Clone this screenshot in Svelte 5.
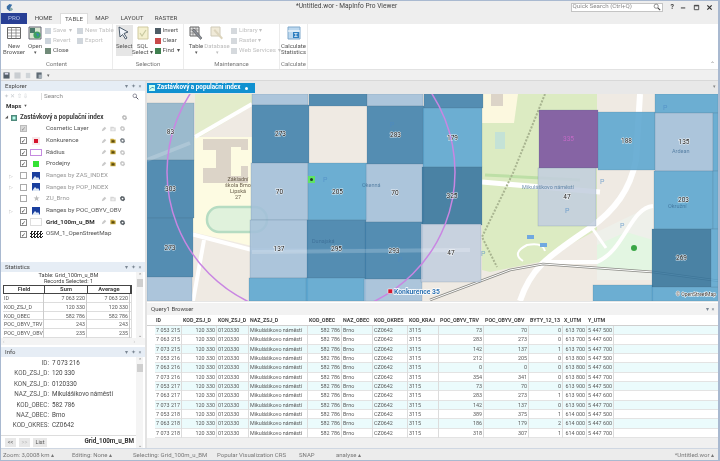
<script>
  const tabs = [['HOME',33],['TABLE',28],['MAP',28],['LAYOUT',32],['RASTER',36]];
  const layers = [
    {n:'Cosmetic Layer',c:'grey',s:'none',p:1,f:0,g:0},
    {n:'Konkurence',c:'on',s:'red',p:1,f:1,g:1},
    {n:'Rádius',c:'on',s:'rad',p:1,f:1,g:0},
    {n:'Prodejny',c:'on',s:'green',p:1,f:1,g:0},
    {n:'Ranges by ZAS_INDEX',c:'off',s:'rng',r:1,dim:true},
    {n:'Ranges by POP_INDEX',c:'off',s:'rng',r:1,dim:true},
    {n:'ZU_Brno',c:'off',s:'star',dim:true,p:1,f:0,g:2},
    {n:'Ranges by POC_OBYV_OBV',c:'on',s:'rng',r:1},
    {n:'Grid_100m_u_BM',c:'on',s:'grid',b:1,p:1,f:1,g:2},
    {n:'OSM_1_OpenStreetMap',c:'on',s:'osm'}
  ];
  const stats = [['ID','7 063 220','7 063 220'],['KOD_ZSJ_D','120 330','120 330'],['KOD_OBEC','582 786','582 786'],['POC_OBYV_TRV','243','243'],['POC_OBYV_OBV','235','235']];
  const info = [['ID','7 073 216'],['KOD_ZSJ_D','120 330'],['KON_ZSJ_D','0120330'],['NAZ_ZSJ_D','Mikulášikovo náměstí'],['KOD_OBEC','582 786'],['NAZ_OBEC','Brno'],['KOD_OKRES','CZ0642']];
  const head = ['ID','KOD_ZSJ_D','KON_ZSJ_D','NAZ_ZSJ_D','KOD_OBEC','NAZ_OBEC','KOD_OKRES','KOD_KRAJ','POC_OBYV_TRV','POC_OBYV_OBV','BYTY_12_13','X_UTM','Y_UTM'];
  const right = [1,1,0,0,1,0,0,0,1,1,1,1,1];
  const trv = [73,283,142,212,0,354,73,283,142,389,186,318];
  const obv = [70,273,137,205,0,341,70,273,137,375,179,307];
  const byty = [0,0,1,0,0,0,0,1,0,1,2,1];
  const rows = trv.map((t,i)=>{
    const a=['7 053','7 063','7 073'][i%3], b=215+Math.floor(i/3);
    const x=['613 700','613 800','613 900','614 000'][Math.floor(i/3)];
    const y=['5 447 500','5 447 600','5 447 700'][i%3];
    return [`${a} ${b}`,'120 330','0120330','Mikulášikovo náměstí','582 786','Brno','CZ0642','3115',t,obv[i],byty[i],x,y];
  });
  const L='#a3bfd9', M='#5aa5cf', D='#3f80ab', V='#33739b', G='#c3cede';
  const cells = [
    [147,103,47,57,'#8fb3c9',83],[147,160,47,58,D,303],[147,218,46,59,D,273],[147,277,45,24,L,''],
    [252,94,56,11,L,''],[252,105,57,58,D,273],[251,163,57,57,L,70],[250,220,58,58,L,137],[249,278,59,23,M,''],
    [309,94,58,12,D,''],[308,163,59,57,M,205],[307,220,59,58,D,295],[306,278,60,23,M,''],
    [367,94,56,12,L,''],[367,106,57,58,D,283],[366,164,58,58,L,70],[365,222,58,57,D,293],[364,279,58,22,L,''],
    [424,94,59,14,D,''],[423,108,59,59,M,179],[422,167,60,58,V,325],[421,224,60,58,G,47],
    [539,110,59,58,'#7a519f',335],[538,168,58,58,G,47],
    [598,112,57,58,M,188],[593,285,60,16,M,''],
    [655,94,63,19,M,''],[655,113,58,58,L,135],[654,171,59,58,M,203],[652,229,59,58,V,269],[652,287,66,14,M,''],
    [713,113,5,58,M,''],[713,171,5,58,M,''],[711,229,7,58,M,'']
  ];
</script>

{#snippet small(label, color, dim=false)}
  <div class="small" class:dim><i class="si" style="background:{color}"></i>{label}</div>
{/snippet}

<div class="win">
  <header class="title">
    <svg class="logo" viewBox="0 0 10 10" width="9" height="9"><path d="M5 1 2 3.500 2 6.500 5 9 8.500 7.500 6 5 8 2Z" fill="#3a6ea5"/><circle cx="6.800" cy="7" r="1.600" fill="#8aa"/></svg>
    <span class="ttext">*Untitled.wor - MapInfo Pro Viewer</span>
    <div class="wctl">
      <div class="qs"><span>Quick Search (Ctrl+Q)</span>
        <svg viewBox="0 0 10 10" width="8" height="8"><circle cx="4" cy="4" r="2.600" fill="none" stroke="#777" stroke-width="1"/><path d="M6 6l3 3" stroke="#444" stroke-width="1.400"/></svg>
      </div>
      <b class="w q">?</b>
      <svg class="w" viewBox="0 0 8 8" width="7" height="7"><path d="M1 4.500h5" stroke="#444" stroke-width="1.200"/></svg>
      <svg class="w" viewBox="0 0 8 8" width="7" height="7"><path d="M1.500 1.500h5v5h-5z" fill="none" stroke="#444"/><path d="M1.500 2h5" stroke="#444" stroke-width="1.300"/></svg>
      <svg class="w" viewBox="0 0 8 8" width="7" height="7"><path d="M1.500 1.500l5 5M6.500 1.500l-5 5" stroke="#333" stroke-width="1.400"/></svg>
    </div>
  </header>

  <nav class="tabs">
    <div class="pro">PRO</div>
    {#each tabs as t}<div class="tab" class:active={t[0]==='TABLE'} style="width:{t[1]}px">{t[0]}</div>{/each}
  </nav>

  <section class="ribbon">
    <div class="group g1">
      <div class="gbody">
        <div class="big w26"><svg viewBox="0 0 14 14" width="14" height="14"><path d="M.5 1.500h13v11H.5z" fill="#fff" stroke="#666"/><path d="M.5 4h13M.5 7h13M.5 10h13M4.500 1.500v11M9 1.500v11" stroke="#777" stroke-width=".7"/></svg><span>New<br>Browser</span></div>
        <div class="big w16"><svg viewBox="0 0 14 14" width="14" height="14"><path d="M1 1h12v12H1z" fill="#d8e6d0" stroke="#667"/><path d="M2 2h5v5H2z" fill="#4a7a6a"/><circle cx="9" cy="9" r="3.600" fill="#3fa060"/><path d="M8 7l3 1-1 3z" fill="#3b7fc0"/></svg><span>Open<br><em>▾</em></span></div>
        <div class="col w32 ml2">
          {@render small('Save  ▾','#ccd4dc',true)}
          {@render small('Revert','#ccd4dc',true)}
          {@render small('Close','#708a78')}
        </div>
        <div class="col w34">
          {@render small('New Table','#d0d6dc',true)}
          {@render small('Export','#d0d6dc',true)}
        </div>
      </div>
      <div class="glabel">Content</div>
    </div>
    <div class="group g2">
      <div class="gbody">
        <div class="big w17 sel ml3"><svg viewBox="0 0 14 14" width="14" height="14"><path d="M2 1l9 5-4 1.500L10 12l-1.500 1-3-4.500L3 11z" fill="#f2f6fb" stroke="#3c4c5c" stroke-width=".9"/></svg><span>Select</span></div>
        <div class="big w20"><svg viewBox="0 0 14 14" width="14" height="14"><path d="M2 1h10v12H2z" fill="#f4f0cf" stroke="#cfc9a0"/><path d="M4 7l2 3 4-6" fill="none" stroke="#c8c8a0" stroke-width="1.200"/></svg><span>SQL<br>Select ▾</span></div>
        <div class="col w31 ml2">
          {@render small('Invert','#4f5d66')}
          {@render small('Clear','#c94a4a')}
          {@render small('Find  ▾','#3f7f4f')}
        </div>
      </div>
      <div class="glabel">Selection</div>
    </div>
    <div class="group g3">
      <div class="gbody">
        <div class="big w20 ml2"><svg viewBox="0 0 14 14" width="14" height="14"><path d="M1 1h9v9H1z" fill="#e5e5e5" stroke="#666"/><path d="M1 4h9M1 7h9M4 1v9M7 1v9" stroke="#777" stroke-width=".7"/><path d="M5 3l8 9-1.500 1.500-8-9z" fill="#8a8f98" stroke="#444" stroke-width=".5"/></svg><span>Table<br><em>▾</em></span></div>
        <div class="big w22 dim"><svg viewBox="0 0 14 14" width="14" height="14"><path d="M1 1h9v9H1z" fill="#f0ead8" stroke="#cfcab8"/><path d="M5 3l8 9-1.500 1.500-8-9z" fill="#ddd5bd"/></svg><span>Database<br><em>▾</em></span></div>
        <div class="col w48 ml3">
          {@render small('Library ▾','#d5d9dd',true)}
          {@render small('Raster ▾','#d5d9dd',true)}
          {@render small('Web Services ▾','#d5d9dd',true)}
        </div>
      </div>
      <div class="glabel">Maintenance</div>
    </div>
    <div class="group g4">
      <div class="gbody">
        <div class="big w28"><svg viewBox="0 0 14 14" width="14" height="14"><path d="M1 1h12v12H1z" fill="#bcd8ef" stroke="#7ea8cc"/><path d="M1 5h12" stroke="#fff"/><path d="M6 6h6v6H6z" fill="#2f7fc0"/><path d="M10.500 7.500h-3l2 1.500-2 1.500h3" fill="none" stroke="#fff" stroke-width=".7"/></svg><span>Calculate<br>Statistics</span></div>
      </div>
      <div class="glabel">Calculate</div>
    </div>
    <span class="collapse">⌃</span>
  </section>

  <div class="qat">
    <svg viewBox="0 0 8 8" width="7" height="7"><path d="M.5.500h7v7h-7z" fill="#55606a"/><path d="M2 1h4v2H2z" fill="#dde"/></svg>
    <svg viewBox="0 0 8 8" width="7" height="7"><path d="M.5.500h7v7h-7z" fill="#c9cdd1"/></svg>
    <svg viewBox="0 0 8 8" width="7" height="7"><path d="M1 1h5v6H1z" fill="#cfd4d8"/></svg>
    <svg viewBox="0 0 8 8" width="7" height="7"><path d="M.5.500h6v7h-6z" fill="#5e6a74"/><path d="M3 3h4v4H3z" fill="#a7b0b8"/></svg>
    <span class="qarrow">▾</span>
  </div>

  <main class="main">
    <aside class="left">
      <div class="ptitle"><span>Explorer</span><span class="pbtns">▾ ✦ ×</span></div>
      <div class="extool">
        <span class="exi">✦ ✕ ⇧ ⇩</span>
        <div class="search"><span>Search</span><svg viewBox="0 0 10 10" width="7" height="7"><circle cx="4" cy="4" r="2.600" fill="none" stroke="#667" stroke-width="1"/><path d="M6 6l3 3" stroke="#445" stroke-width="1.300"/></svg></div>
      </div>
      <div class="maps"><b>Maps</b> <span>▼</span></div>
      <div class="root"><span class="tri">◢</span><svg viewBox="0 0 8 8" width="6" height="6"><path d="M0 0h8v8H0z" fill="#4f8a7c"/><path d="M2 2h4v4H2z" fill="#bfe"/></svg><b>Zastávkový a populační index</b>
        <svg class="rg" viewBox="0 0 8 8" width="7" height="7"><path d="M1 3l2-2 3 1 1 3-2 2-3-1z" fill="#bdbdbd"/><circle cx="4" cy="4" r="1" fill="#fff"/></svg>
      </div>
      <div class="tree">
        {#each layers as l}
          <div class="layer" class:dimr={l.dim}>
            <span class="exp">{l.r ? '▷' : ''}</span>
            <span class="cb {l.c}">{l.c==='off' ? '' : '✓'}</span>
            {#if l.r}
              <span class="sw swr"><svg viewBox="0 0 8 8" width="8" height="8"><path d="M0 0h8v8H0z" fill="#1a3f9e"/><path d="M0 8l3-4 2 2 1-1 2 3z" fill="#dfe9f5"/></svg></span>
            {:else if l.s==='red'}
              <span class="sw"><i class="dot red"></i></span>
            {:else if l.s==='green'}
              <span class="sw"><i class="dot green"></i></span>
            {:else if l.s==='rad'}
              <span class="sw"><i class="radb"></i></span>
            {:else if l.s==='star'}
              <span class="sw star">★</span>
            {:else if l.s==='grid'}
              <span class="sw"><i class="gridb"></i></span>
            {:else if l.s==='osm'}
              <span class="sw"><i class="osm"></i></span>
            {:else}
              <span class="sw"></span>
            {/if}
            <span class="lname" class:bold={l.b}>{l.n}</span>
            {#if l.p}
              <span class="acts">
                <svg viewBox="0 0 8 8" width="6" height="6"><path d="M1 7l1-3 3-3 2 2-3 3z" fill="#c9c9c9"/></svg>
                <svg viewBox="0 0 8 8" width="6" height="6"><path d="M.5 1h4l1 1h2v5h-7z" fill={l.f ? '#c8a93a' : '#d5d5d5'}/><path d="M2 3h4v3H2z" fill={l.f ? '#5a4a10' : '#eee'}/></svg>
                <svg viewBox="0 0 8 8" width="7" height="7"><path d="M1 3l2-2 3 1 1 3-2 2-3-1z" fill={l.g===1 ? '#7d848a' : l.g===2 ? '#5a6167' : '#c9c9c9'}/><circle cx="4" cy="4" r="1" fill="#fff"/></svg>
              </span>
            {/if}
          </div>
        {/each}
      </div>
      <div class="fill"></div>

      <div class="ptitle"><span>Statistics</span><span class="pbtns">▾ ✦ ×</span></div>
      <div class="statwrap">
        <div class="statbody">
          <div class="statcap">Table: Grid_100m_u_BM<br>Records Selected: 1</div>
          <div class="sthead"><b>Field</b><b>Sum</b><b>Average</b></div>
          {#each stats as s}
            <div class="strow"><span>{s[0]}</span><span class="r">{s[1]}</span><span class="r">{s[2]}</span></div>
          {/each}
        </div>
        <div class="vs"><span>⌃</span><i></i><span class="mt">⌄</span></div>
      </div>
      <div class="hs"><span>‹</span><span>›</span></div>

      <div class="ptitle t2"><span>Info</span><span class="pbtns">▾ ✦ ×</span></div>
      <div class="statwrap infoarea">
        <div class="infobody">
          {#each info as r}
            <div class="irow"><span class="ik">{r[0]}:</span><span>{r[1]}</span></div>
          {/each}
          <div class="ibtns"><button>&lt;&lt;</button><button class="off">&gt;&gt;</button><button>List</button><b>Grid_100m_u_BM</b></div>
        </div>
        <div class="vs"><span>⌃</span><i></i><span class="mt">⌄</span></div>
      </div>
    </aside>

    <div class="right">
      <div class="mapbar"><div class="maptab"><svg viewBox="0 0 8 8" width="6" height="6"><path d="M0 0h8v8H0z" fill="#cfe"/><path d="M1 6l3-3 3 1" stroke="#27a" fill="none"/></svg><b>Zastávkový a populační index</b><span class="tdot"></span></div><span class="barr">▾</span></div>
      <svg class="map" viewBox="147 94 571 207" preserveAspectRatio="none">
        <rect x="147" y="94" width="571" height="207" fill="#efeae3"/>
        <path d="M195 94H252V106L195 140Z" fill="#e3eccb"/>
        <path d="M192 137H252V246L192 232Z" fill="#fdfbe2"/>
        <path d="M203 139H248V150H233V166H248V183H203V168H216V150H203Z" fill="#dcd4c8"/>
        <path d="M231 147h10v29h-10z" fill="#fdfbe2"/>
        <rect x="207" y="207" width="60" height="25" rx="12" fill="#e0f2dc" stroke="#b6dcc2" stroke-width="2.500"/>
        <path d="M252 104L195 137" stroke="#fff" stroke-width="4" fill="none"/>
        <path d="M191 234L252 250 470 250" stroke="#fff" stroke-width="4" fill="none"/>
        <path d="M204 240L193 301" stroke="#fff" stroke-width="4" fill="none"/>
        <path d="M482 94H597V230L560 250 540 262 490 272 482 270Z" fill="#dcebc2"/>
        <path d="M482 94H518L514 123H482Z" fill="#fcf8df"/>
        <path d="M491 94h12v12h-12z" fill="#dcd4c8"/>
        <rect x="495" y="132" width="10" height="17" fill="#c4e2d6"/>
        <path d="M485 175L580 180" stroke="#bddfa6" stroke-width="3"/>
        <path d="M482 182L600 192" stroke="#fff" stroke-width="5"/>
        <path d="M597 232L653 205V280H597Z" fill="#eef0ea"/>
        <path d="M597 245L626 232 653 240V270H597Z" fill="#e3f6e2"/>
        <path d="M520 301C530 270 545 258 590 228C615 210 630 190 636 160L640 94" stroke="#fff" stroke-width="6" fill="none"/>
        <path d="M543 262H597C625 250 630 208 653 206" stroke="#fff" stroke-width="4" fill="none"/>
        <path d="M592 228L606 248" stroke="#fff" stroke-width="3"/>
        <path d="M430 300L510 270 543 264 653 272 720 281" stroke="#8a8a85" stroke-width="2.500" fill="none"/>
        <path d="M430 300L510 270 543 264 653 272 720 281" stroke="#fff" stroke-width="1" fill="none"/>
        <path d="M545 94L513 173 482 237 497 267" stroke="#a8b490" stroke-width="2" stroke-dasharray="2 1.500" fill="none"/>
        <path d="M523 261q-12-8 4-16q16-3 18 6" stroke="#fff" stroke-width="2" fill="none"/>
        <rect x="527" y="235" width="7" height="4" fill="#70a8e0"/>
        <rect x="540" y="243" width="7" height="4" fill="#70a8e0"/>
        <circle cx="634" cy="248" r="3" fill="#3aa646"/>
        {#each cells as c}
          <rect x={c[0]} y={c[1]} width={c[2]} height={c[3]} fill={c[4]} fill-opacity=".88" stroke="#46677f" stroke-opacity=".35" stroke-width=".5"/>
        {/each}
        <path d="M147 160L190 143M252 252L470 250" stroke="#fff" stroke-opacity=".18" stroke-width="4" fill="none"/>
        <circle cx="311" cy="172" r="144" fill="none" stroke="#c986e2" stroke-width="1.500"/>
        <g>
          <text x="323" y="182" class="minor">P</text>
          <text x="390" y="127" class="minor">P</text>
          <text x="398" y="262" class="minor">P</text>
          <text x="362" y="187" class="minor2">Okenná</text>
          <text x="312" y="243" class="minor2">Dunajská</text>
          <text x="522" y="189" class="minor2">Mikuláškovo náměstí</text>
          <text x="672" y="153" class="minor2">Ardean</text>
          <text x="668" y="208" class="minor2">Okružní</text>
          <text x="600" y="184" class="minor">P</text>
          <text x="620" y="228" class="minor">P</text>
          <text x="481" y="256" class="minor">P</text>
          <text x="663" y="110" class="minor">P</text>
          <text x="565" y="213" class="minor">P</text>
        </g>
        <text x="238" y="181" class="school">Základní</text>
        <text x="238" y="187" class="school">škola Brno</text>
        <text x="238" y="193" class="school">Lipská</text>
        <text x="238" y="199" class="school">27</text>
        {#each cells as c}
          {#if c[5]!==''}
            <text x={c[0]+c[2]/2} y={c[1]+c[3]/2+2} class="cv" class:pur={c[5]===335}>{c[5]}</text>
          {/if}
        {/each}
        <rect x="308" y="176" width="7" height="7" fill="#5fe464"/>
        <circle cx="311.500" cy="179.500" r="1.500" fill="#1c3d2a"/>
        <rect x="388" y="289" width="4.500" height="4.500" fill="#d6162c" stroke="#fff" stroke-width=".5"/>
        <text x="394" y="294" class="konk">Konkurence 35</text>
        <text x="716" y="296" class="attr">© OpenStreetMap</text>
      </svg>
      <div class="brtitle"><span>Query1 Browser</span><span class="pbtns">▾ ×</span></div>
      <div class="browser">
        <div class="trow thead"><span class="rh"></span>{#each head as h}<b>{h}</b>{/each}<span></span></div>
        {#each rows as r, i}
          <div class="trow" class:alt={i%2===0}><span class="rh"></span>{#each r as v, j}<span class="cell" class:r={right[j]}>{v}</span>{/each}<span></span></div>
        {/each}
      </div>
      <div class="brfoot"></div>
    </div>
  </main>

  <footer class="status">
    <span>Zoom: 3,0008 km ▴</span>
    <span>Editing: None ▴</span>
    <span>Selecting: Grid_100m_u_BM</span>
    <span>Popular Visualization CRS</span>
    <span>SNAP</span>
    <span>analyse ▴</span>
    <span>*Untitled.wor ▴</span>
  </footer>
</div>

<style>
  :global(body){margin:0;background:#fff}
  .win{width:720px;height:461px;box-sizing:border-box;border:1px solid #a9b9d0;border-right-width:2px;display:flex;flex-direction:column;overflow:hidden;font:6.2px/1.2 Roboto,"Liberation Sans",sans-serif;color:#3a3a3a;background:#eeeeee;filter:blur(.3px)}
  .title{height:12px;display:flex;align-items:center;position:relative;flex:none}
  .logo{margin-left:4px}
  .ttext{position:absolute;left:295px;top:2px;font-size:6.600px;color:#444}
  .wctl{margin-left:auto;display:flex;align-items:center;gap:6px;padding-right:5px}
  .qs{width:88px;height:7px;background:#fff;border:1px solid #c4c4c4;display:flex;justify-content:space-between;align-items:center;color:#8a8a8a;padding:0 1px;margin-right:2px}
  .q{font-size:7px;line-height:7px}
  .w{display:block}
  .tabs{height:11px;display:flex;flex:none;font-size:6.200px;color:#444}
  .pro{width:26px;background:#283f95;color:#b9c6ea;text-align:center;line-height:11px}
  .tab{text-align:center;line-height:11px}
  .tab.active{background:#fff;color:#555;border:1px solid #ddd;border-bottom:0;box-sizing:border-box;line-height:10px}
  .ribbon{height:46px;background:#fff;display:flex;flex:none;position:relative;border-bottom:1px solid #e2e2e2;box-sizing:border-box}
  .group{display:flex;flex-direction:column;border-right:1px solid #ececec;box-sizing:border-box}
  .g1{width:112px}.g2{width:71px}.g3{width:96px}.g4{width:28px}
  .gbody{flex:1;display:flex;padding-top:2px}
  .glabel{text-align:center;color:#777;height:9px;line-height:8px;font-size:6px}
  .big{display:flex;flex-direction:column;align-items:center;text-align:center;line-height:6.200px;color:#555;font-size:6px;gap:3px;white-space:nowrap}
  .big em{font-style:normal;font-size:5px}
  .big.dim{color:#bdbdbd}
  .sel{background:#e6e6e6;height:30px;padding-top:1px;margin-top:-1px}
  .ml2{margin-left:2px}.ml3{margin-left:3px}
  .w16{width:16px}.w17{width:17px}.w20{width:20px}.w22{width:22px}.w26{width:26px}.w28{width:28px}.w31{width:31px}.w32{width:32px}.w34{width:34px}.w48{width:48px}
  .col{display:flex;flex-direction:column;gap:3px;padding-top:1px}
  .small{display:flex;align-items:center;gap:2px;white-space:pre;color:#555;height:7px}
  .small.dim{color:#c2c2c2}
  .si{width:6px;height:6px;display:block;flex:none}
  .collapse{position:absolute;right:3px;bottom:2px;color:#888;font-size:6px}
  .qat{height:11px;flex:none;display:flex;align-items:center;gap:4px;padding-left:2px;border-bottom:1px solid #d8d8d8;box-sizing:border-box;background:#f0f0f0}
  .qarrow{font-size:5px;color:#666}
  .main{flex:1;display:flex;min-height:0;background:#e2e2e2}
  .left{width:144px;flex:none;background:#fff;display:flex;flex-direction:column;margin-right:2px}
  .ptitle{height:10px;flex:none;background:#e6edf5;display:flex;justify-content:space-between;align-items:center;padding:0 3px 0 4px;color:#444;font-size:6px}
  .t2{margin-top:2px}
  .pbtns{color:#7b8794;font-size:5.500px;white-space:pre;letter-spacing:.6px}
  .extool{height:11px;display:flex;align-items:center;padding-left:3px;gap:3px;flex:none}
  .exi{color:#c9cdd1;width:34px;font-size:5.500px;white-space:pre}
  .search{flex:1;display:flex;justify-content:space-between;align-items:center;border-left:1px solid #ddd;color:#888;padding:0 2px;margin-right:4px}
  .maps{height:9px;flex:none;padding-left:5px;display:flex;align-items:center;gap:2px;color:#333}
  .maps span{font-size:4px;color:#555}
  .root{height:11px;flex:none;display:flex;align-items:center;padding-left:4px;gap:3px;color:#3a3a3a;position:relative;margin-top:1px}
  .rg{position:absolute;left:120px}
  .tri{font-size:4px;color:#555}
  .root b{font-size:6.300px}
  .tree{display:flex;flex-direction:column}
  .layer{height:11.700px;display:flex;align-items:center;position:relative;color:#555}
  .dimr{color:#999}
  .exp{width:19px;text-align:right;padding-right:7px;box-sizing:border-box;color:#bbb;font-size:5px}
  .cb{width:5px;height:5px;border:1px solid #888;display:block;text-align:center;font-size:6px;line-height:5px;color:#333;background:#fff;flex:none}
  .cb.grey{background:#d8d8d8;border-color:#bbb;color:#888}
  .cb.off{border-color:#aaa}
  .sw{width:14px;margin-left:2px;height:8px;display:flex;align-items:center;justify-content:center;flex:none}
  .swr{justify-content:flex-start;margin-left:5px;width:11px}
  .star{color:#bbb;font-size:8px}
  .dot{width:4px;height:4px;display:block}
  .red{background:#d5122a;box-shadow:0 0 0 2px #f7e8ea}
  .green{background:#34e234;width:6px;height:6px}
  .radb{width:10px;height:5px;border:1px solid #c58adf;display:block}
  .gridb{width:10px;height:6px;border:1px solid #ddd;display:block}
  .osm{width:13px;height:7px;display:block;background:repeating-conic-gradient(#222 0 25%,#fff 0 50%) 0 0/3px 3px}
  .lname{margin-left:3px}
  .bold{font-weight:700;color:#333}
  .acts{position:absolute;left:100px;display:flex;gap:3px;align-items:center}
  .fill{flex:1}
  .statwrap{display:flex;flex:none}
  .statbody{flex:1;min-width:0;height:66px;overflow:hidden}
  .statcap{text-align:center;font-size:5.600px;line-height:6.300px;height:13px;color:#444}
  .sthead,.strow{display:grid;grid-template-columns:41px 43px 43px;margin-left:2px}
  .sthead{border:1px solid #444;width:127px;height:7px;align-items:center;text-align:center;font-size:5.800px;background:#fff;color:#444}
  .sthead b{border-right:1px solid #444}
  .strow{height:8.800px;line-height:8.800px;border-bottom:1px solid #ddd;box-sizing:border-box;font-size:5.300px;color:#555;border-right:1px solid #ddd;width:129px}
  .strow span{padding:0 1px;border-right:1px solid #ccc;white-space:nowrap}
  .r{text-align:right}
  .vs{width:7px;background:#f4f4f4;display:flex;flex-direction:column;align-items:center;font-size:5px;color:#777;margin-right:2px}
  .vs i{display:block;width:6px;height:8px;background:#cfcfcf;margin-top:1px}
  .mt{margin-top:auto}
  .hs{height:7px;background:#f4f4f4;display:flex;justify-content:space-between;padding:0 10px 0 2px;font-size:5px;color:#bbb;line-height:6px;flex:none}
  .infoarea{height:91px}
  .infobody{flex:1;min-width:0;padding-top:1px;display:flex;flex-direction:column}
  .irow{display:grid;grid-template-columns:48px 1fr;gap:3px;height:10.400px;line-height:10.400px;font-size:6.300px;color:#444;white-space:nowrap}
  .ik{text-align:right;color:#555}
  .ibtns{margin-top:auto;display:flex;align-items:center;border-top:1px solid #ddd;height:12px;padding-left:4px;gap:3px}
  button{font:inherit;font-size:5.500px;background:#e8e8e8;border:0;height:9px;width:11px;padding:0;color:#555}
  button.off{color:#bbb}
  button:nth-child(3){width:14px}
  .ibtns b{margin-left:auto;color:#333;font-size:6.300px;padding-right:2px}
  .right{flex:1;min-width:0;display:flex;flex-direction:column;background:#e6e6e6}
  .mapbar{height:13px;flex:none;display:flex;align-items:flex-start;justify-content:space-between;padding-top:2px;background:#e8e8e8;box-sizing:border-box}
  .maptab{width:108px;height:10px;background:#1191d0;color:#fff;display:flex;align-items:center;gap:2px;padding-left:2px;box-sizing:border-box;font-size:6.300px;white-space:nowrap}
  .tdot{width:3px;height:3px;border-radius:50%;background:#fff;margin-left:3px}
  .barr{color:#888;font-size:5px;padding-right:2px}
  .map{display:block;width:571px;height:207px;flex:none}
  .cv{font:6.500px Roboto,"Liberation Sans",sans-serif;text-anchor:middle;fill:#222;paint-order:stroke;stroke:#fff;stroke-width:1.200px;stroke-opacity:.75}
  .pur{fill:#c46ac7;stroke:none}
  .minor{font:7px Roboto,sans-serif;fill:#4c89c4;opacity:.7}
  .minor2{font:5.500px Roboto,sans-serif;fill:#36668f;opacity:.7}
  .school{font:5.500px Roboto,sans-serif;fill:#6a5f4c;text-anchor:middle}
  .konk{font:700 6.800px Roboto,sans-serif;fill:#2f73b2;paint-order:stroke;stroke:#fff;stroke-width:1.500px}
  .attr{font:5px Roboto,sans-serif;fill:#333;text-anchor:end;paint-order:stroke;stroke:#fff;stroke-width:1px}
  .brtitle{height:13px;flex:none;background:#f2f2f2;border-top:1px solid #fff;display:flex;align-items:center;justify-content:space-between;padding:0 3px 0 4px;box-sizing:border-box;margin-top:1px;color:#444;font-size:6px}
  .browser{flex:none;background:#fff;width:571px;display:flex;flex-direction:column;height:123px}
  .trow{display:grid;grid-template-columns:8px 27px 35px 32px 59px 34px 31px 35px 31px 45px 45px 34px 24px 27px 1fr;height:9.330px;line-height:9.330px;font-size:5.400px;color:#5a5a5a;white-space:nowrap;border-bottom:1px solid #e3e3e3;box-sizing:border-box;flex:none}
  .thead{height:11px;line-height:10px;color:#444;border-bottom:1px solid #cfcfcf;font-size:5.300px}
  .thead b{padding:0 1px;white-space:nowrap}
  .alt{background:#ebfbfc}
  .rh{background:#fff}
  .cell{padding:0 1px;border-right:1px solid #dcdcdc}
  .cell.r{text-align:right}
  .brfoot{flex:1;background:#f0f0f0}
  .status{height:12px;flex:none;background:#ececec;border-top:1px solid #cfd7e2;box-sizing:border-box;color:#777;font-size:6px;display:grid;grid-template-columns:69px 61px 84px 82px 37px 1fr auto;align-items:center;padding-left:2px;padding-right:4px;white-space:nowrap}
</style>
